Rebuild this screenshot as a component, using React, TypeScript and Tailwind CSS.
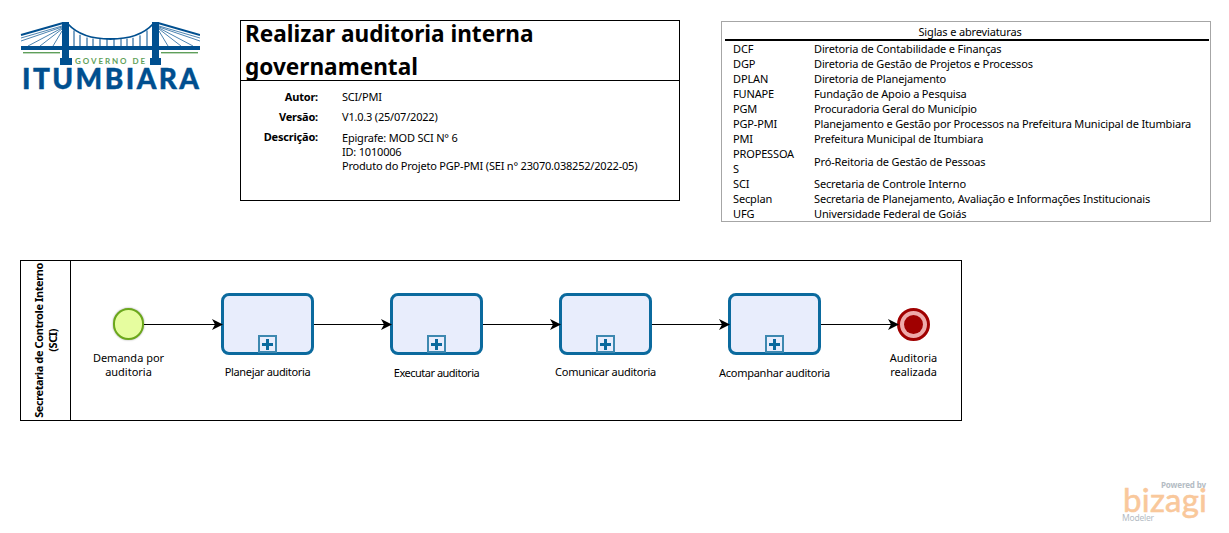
import React from "react";

const ui = "font-['Noto_Sans','Open_Sans',sans-serif]";

function Logo() {
  const hangers = [74, 80, 87, 93, 100, 107, 114, 121, 127, 133, 140, 147];
  const depth = (x: number) => {
    const t = (x - 110.5) / 42;
    return 39 - 15 * t * t * t * t;
  };
  return (
    <svg width="180" height="74" viewBox="20 20 180 74" className="block shrink-0">
      <g stroke="#004f8f" fill="none">
        {hangers.map((x) => (
          <line key={x} x1={x} y1={depth(x)} x2={x} y2="47" strokeWidth="1" />
        ))}
        <path d="M68 24 C78 35 95 39 110.5 39 C126 39 143 35 153 24" strokeWidth="1.8" />
        <path d="M21 35 L63 23" strokeWidth="2" />
        <path d="M200 35 L158 23" strokeWidth="2" />
        <g strokeWidth="0.7">
          <path d="M62 26 L21 38 M62 27 L21 41 M62 28 L28 46 M62 29 L40 46 M62 31 L53 46" />
          <path d="M159 26 L200 38 M159 27 L200 41 M159 28 L193 46 M159 29 L181 46 M159 31 L168 46" />
        </g>
      </g>
      <rect x="21" y="46" width="179" height="4" fill="#004f8f" />
      <rect x="62" y="22" width="7" height="38" fill="#004f8f" />
      <rect x="152" y="22" width="7" height="38" fill="#004f8f" />
      <rect x="60" y="58" width="12" height="7" fill="#004f8f" />
      <rect x="150" y="58" width="11" height="7" fill="#004f8f" />
      <rect x="23" y="52" width="37" height="1.4" fill="#5f9f5a" />
      <rect x="161" y="52" width="37" height="1.4" fill="#5f9f5a" />
      <text x="75" y="64" textLength="70" fontFamily="Lato, sans-serif" fontWeight="700" fontSize="8" fill="#5f9f5a">
        GOVERNO DE
      </text>
      <text x="22" y="88.5" textLength="177" fontFamily="Lato, sans-serif" fontWeight="900" fontSize="28" fill="#004f8f" stroke="#004f8f" strokeWidth="0.4">
        ITUMBIARA
      </text>
    </svg>
  );
}

function TitleBox() {
  return (
    <div className="w-[440px] h-[181px] border border-black shrink-0 text-black">
      <div className="flow-root h-[60px] border-b border-black pl-[4px] text-[22.6px] leading-[33px] font-bold">
        <div className="-mt-[4px] h-[60px]">
          Realizar auditoria interna
          <br />
          governamental
        </div>
      </div>
      <div className="grid grid-cols-[77px_1fr] gap-x-[24px] text-[11px] leading-[14px] mt-[9px] tracking-[-0.2px]">
        <div className="font-bold text-right h-[20px]">Autor:</div>
        <div>SCI/PMI</div>
        <div className="font-bold text-right h-[20px]">Versão:</div>
        <div>V1.0.3 (25/07/2022)</div>
        <div className="font-bold text-right">Descrição:</div>
        <div className="pt-[1px]">
          Epigrafe: MOD SCI N° 6
          <br />
          ID: 1010006
          <br />
          Produto do Projeto PGP-PMI (SEI n° 23070.038252/2022-05)
        </div>
      </div>
    </div>
  );
}

const siglas: [string, string][] = [
  ["DCF", "Diretoria de Contabilidade e Finanças"],
  ["DGP", "Diretoria de Gestão de Projetos e Processos"],
  ["DPLAN", "Diretoria de Planejamento"],
  ["FUNAPE", "Fundação de Apoio a Pesquisa"],
  ["PGM", "Procuradoria Geral do Município"],
  ["PGP-PMI", "Planejamento e Gestão por Processos na Prefeitura Municipal de Itumbiara"],
  ["PMI", "Prefeitura Municipal de Itumbiara"],
  ["PROPESSOAS", "Pró-Reitoria de Gestão de Pessoas"],
  ["SCI", "Secretaria de Controle Interno"],
  ["Secplan", "Secretaria de Planejamento, Avaliação e Informações Institucionais"],
  ["UFG", "Universidade Federal de Goiás"],
];

function SiglasBox() {
  return (
    <div className="w-[490px] h-[201px] mt-[1px] border border-[#a6a6a6] pl-[3px] pr-[1px] text-[11px] leading-[15px] tracking-[-0.15px] text-black shrink-0">
      <div className="text-center h-[19px] pt-[2px] pl-[6px] border-b-2 border-black">Siglas e abreviaturas</div>
      <div className="grid grid-cols-[81px_1fr] items-center pl-[8px]">
        {siglas.map(([a, b]) => (
          <React.Fragment key={a}>
            <div className="w-[64px] break-all">{a}</div>
            <div className="whitespace-nowrap">{b}</div>
          </React.Fragment>
        ))}
      </div>
    </div>
  );
}

function Arrow({ w }: { w: number }) {
  return (
    <svg width={w + 2} height="14" viewBox={`0 0 ${w + 2} 14`} className="block shrink-0 relative z-10 -mr-[2px]">
      <line x1="0" y1="7.5" x2={w - 2} y2="7.5" stroke="#000" strokeWidth="1.1" />
      <path d={`M${w - 9} 2 L${w + 2} 7.5 L${w - 9} 13 L${w - 6} 7.5 Z`} fill="#000" />
    </svg>
  );
}

function Label({ top, children, className = "" }: { top: string; children: React.ReactNode; className?: string }) {
  return (
    <div className={`absolute left-1/2 -translate-x-1/2 w-[150px] text-center text-[11px] leading-[14px] text-black ${top} ${className}`}>
      {children}
    </div>
  );
}

function Task({ label, low, track }: { label: string; low?: boolean; track: string }) {
  return (
    <div className="relative w-[93px] h-[62px] shrink-0 rounded-[8px] border-[3px] border-[#0b6a9e] bg-[#e8edfc]">
      <div className="absolute left-[34px] bottom-[-1px] w-[19px] h-[18px] border-[2px] border-[#3d88b0] bg-[#e8edfc] flex items-center justify-center">
        <svg width="11" height="11" viewBox="0 0 11 11">
          <path d="M4 0 H7 V4 H11 V7 H7 V11 H4 V7 H0 V4 H4 Z" fill="#0b6a9e" />
        </svg>
      </div>
      <Label top={low ? "top-[70px]" : "top-[69px]"} className={track}>
        {label}
      </Label>
    </div>
  );
}

function Lane() {
  return (
    <div className="mt-[38px] ml-[20px] w-[942px] h-[161px] border border-black flex text-black">
      <div className="w-[50px] shrink-0 border-r border-black flex items-center justify-center">
        <div className="[writing-mode:vertical-rl] rotate-180 text-center text-[11px] leading-[14px] font-bold whitespace-nowrap tracking-[-0.4px]">
          Secretaria de Controle Interno
          <br />
          (SCI)
        </div>
      </div>
      <div className="flex items-center h-[64px] mt-[31px] pl-[42px]">
        <div className="relative w-[31px] h-[32px] shrink-0 rounded-full border-2 border-[#6ba81b] bg-[#e6fd9f] shadow-[0_0_2px_#999]">
          <Label top="top-[41px]">
            Demanda por
            <br />
            auditoria
          </Label>
        </div>
        <Arrow w={77} />
        <Task label="Planejar auditoria" track="tracking-[-0.35px]" />
        <Arrow w={76} />
        <Task label="Executar auditoria" low track="tracking-[-0.5px]" />
        <Arrow w={76} />
        <Task label="Comunicar auditoria" track="tracking-[-0.27px]" />
        <Arrow w={76} />
        <Task label="Acompanhar auditoria" low track="tracking-[-0.25px]" />
        <Arrow w={76} />
        <div className="relative w-[33px] h-[33px] shrink-0 rounded-full border-[3px] border-[#a00000] bg-[#eeaaaa] flex items-center justify-center">
          <div className="w-[19px] h-[19px] rounded-full bg-[#a00000]" />
          <Label top="top-[40px]">
            Auditoria
            <br />
            realizada
          </Label>
        </div>
      </div>
    </div>
  );
}

function Bizagi() {
  return (
    <div className="flex justify-end pr-[21px] mt-[58px]">
      <svg width="86" height="46" viewBox="0 0 86 46" className="block overflow-visible">
        <text x="39" y="9" textLength="45" fontFamily="Noto Sans, sans-serif" fontWeight="700" fontSize="8" fill="#b4bcc4">
          Powered by
        </text>
        <text x="1" y="33" textLength="84" fontFamily="Lato, sans-serif" fontWeight="400" fontSize="33" fill="#f9c89b" stroke="#f9c89b" strokeWidth="0.6">
          bizagi
        </text>
        <text x="0" y="41.5" textLength="32" fontFamily="Noto Sans, sans-serif" fontSize="8.5" fill="#b4bcc4">
          Modeler
        </text>
      </svg>
    </div>
  );
}

export default function App() {
  return (
    <div className={`w-[1229px] h-[533px] bg-white overflow-hidden pt-[20px] ${ui}`}>
      <div className="flex items-start h-[202px] pl-[20px]">
        <Logo />
        <div className="ml-[40px]">
          <TitleBox />
        </div>
        <div className="ml-[41px]">
          <SiglasBox />
        </div>
      </div>
      <Lane />
      <Bizagi />
    </div>
  );
}
